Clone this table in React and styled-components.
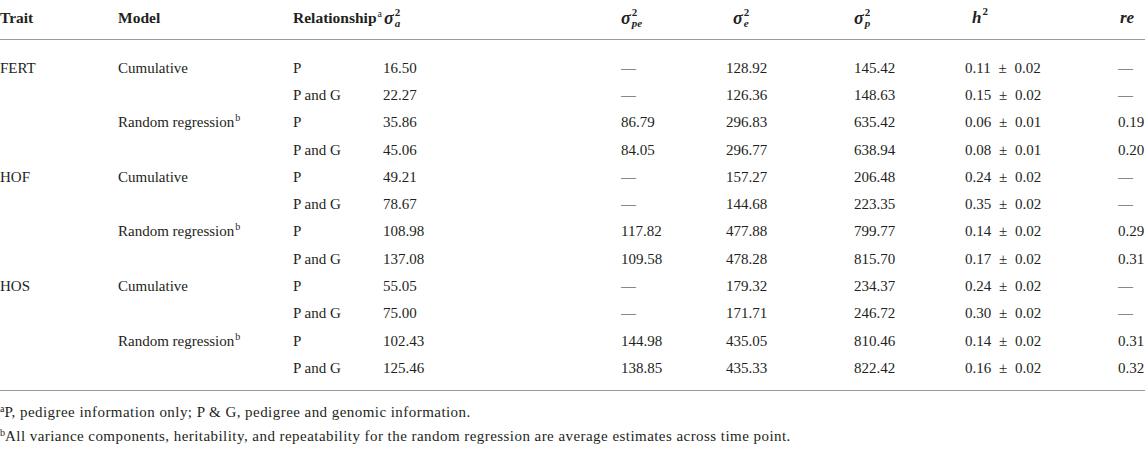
import React from "react";
import styled, { createGlobalStyle } from "styled-components";

const Global = createGlobalStyle`
  html, body { margin: 0; padding: 0; background: #ffffff; }
  body { font-family: "Liberation Serif", "Times New Roman", serif; color: #231f20; }
`;

const COLS = "118px 175px 90px 238px 105px 128px 111px 153px 1fr";

const Page = styled.div`
  width: 1145px;
  display: flex;
  flex-direction: column;
`;

const Table = styled.div`
  display: flex;
  flex-direction: column;
  border-bottom: 1px solid #9a9a9a;
  padding-bottom: 8px;
`;

const HeadRow = styled.div`
  display: grid;
  grid-template-columns: ${COLS};
  height: 40px;
  box-sizing: border-box;
  border-bottom: 1px solid #9a9a9a;
  padding-top: 8px;
  align-items: start;
  font-size: 15.5px;
  font-weight: bold;
  line-height: 20px;
`;

const Body = styled.div`
  display: flex;
  flex-direction: column;
  padding-top: 14px;
`;

const Row = styled.div`
  display: grid;
  grid-template-columns: ${COLS};
  height: 27.3px;
  align-items: center;
  font-size: 15px;
  line-height: 18px;
`;

const Cell = styled.div`
  white-space: nowrap;
  word-spacing: ${(p) => (p.$wide ? "4px" : "normal")};
`;

const HeadCell = styled.div`
  white-space: nowrap;
  padding-left: ${(p) => p.$shift || 0}px;
`;

const Note = styled.sup`
  font-size: 10px;
  font-weight: normal;
  vertical-align: 6px;
  line-height: 0;
  margin-left: 1px;
`;

const Ital = styled.span`
  font-style: italic;
  font-weight: bold;
  font-size: 17px;
`;

const Sigma = styled.span`
  display: inline-flex;
  align-items: flex-start;
  font-style: italic;
  font-weight: bold;
  font-size: 18px;
`;

const Scripts = styled.span`
  display: inline-flex;
  flex-direction: column;
  font-size: 11px;
  line-height: 10px;
  margin-left: 1px;
  margin-top: -1px;
`;

const SupTwo = styled.span`
  font-style: normal;
  font-weight: bold;
`;

const SubLetter = styled.span`
  font-style: italic;
  font-weight: bold;
  margin-top: 1px;
`;

const HTwo = styled.span`
  font-size: 11px;
  font-weight: bold;
  vertical-align: 8px;
  line-height: 0;
  margin-left: 1px;
`;

const Footnotes = styled.div`
  display: flex;
  flex-direction: column;
  gap: 6px;
  padding-top: 12px;
  font-size: 15px;
  letter-spacing: 0.45px;
  line-height: 18px;
`;

const FootLine = styled.div`
  white-space: nowrap;
`;

const FootMark = styled.sup`
  font-size: 10px;
  vertical-align: 5px;
  line-height: 0;
  letter-spacing: 0;
`;

const SigmaHead = ({ sub }) => (
  <Sigma>
    σ
    <Scripts>
      <SupTwo>2</SupTwo>
      <SubLetter>{sub}</SubLetter>
    </Scripts>
  </Sigma>
);

const rows = [
  ["FERT", "Cumulative", "P", "16.50", "—", "128.92", "145.42", "0.11 ± 0.02", "—"],
  ["", "", "P and G", "22.27", "—", "126.36", "148.63", "0.15 ± 0.02", "—"],
  ["", "RR", "P", "35.86", "86.79", "296.83", "635.42", "0.06 ± 0.01", "0.19"],
  ["", "", "P and G", "45.06", "84.05", "296.77", "638.94", "0.08 ± 0.01", "0.20"],
  ["HOF", "Cumulative", "P", "49.21", "—", "157.27", "206.48", "0.24 ± 0.02", "—"],
  ["", "", "P and G", "78.67", "—", "144.68", "223.35", "0.35 ± 0.02", "—"],
  ["", "RR", "P", "108.98", "117.82", "477.88", "799.77", "0.14 ± 0.02", "0.29"],
  ["", "", "P and G", "137.08", "109.58", "478.28", "815.70", "0.17 ± 0.02", "0.31"],
  ["HOS", "Cumulative", "P", "55.05", "—", "179.32", "234.37", "0.24 ± 0.02", "—"],
  ["", "", "P and G", "75.00", "—", "171.71", "246.72", "0.30 ± 0.02", "—"],
  ["", "RR", "P", "102.43", "144.98", "435.05", "810.46", "0.14 ± 0.02", "0.31"],
  ["", "", "P and G", "125.46", "138.85", "435.33", "822.42", "0.16 ± 0.02", "0.32"],
];

export default function App() {
  return (
    <Page>
      <Global />
      <Table>
        <HeadRow>
          <HeadCell>Trait</HeadCell>
          <HeadCell>Model</HeadCell>
          <HeadCell>
            Relationship<Note>a</Note>
          </HeadCell>
          <HeadCell $shift={1}>
            <SigmaHead sub="a" />
          </HeadCell>
          <HeadCell>
            <SigmaHead sub="pe" />
          </HeadCell>
          <HeadCell $shift={7}>
            <SigmaHead sub="e" />
          </HeadCell>
          <HeadCell>
            <SigmaHead sub="p" />
          </HeadCell>
          <HeadCell $shift={7}>
            <Ital>h</Ital>
            <HTwo>2</HTwo>
          </HeadCell>
          <HeadCell $shift={2}>
            <Ital>re</Ital>
          </HeadCell>
        </HeadRow>
        <Body>
          {rows.map((r, i) => (
            <Row key={i}>
              {r.map((c, j) => (
                <Cell key={j} $wide={j === 7}>
                  {c === "RR" ? (
                    <>
                      Random regression<Note>b</Note>
                    </>
                  ) : (
                    c
                  )}
                </Cell>
              ))}
            </Row>
          ))}
        </Body>
      </Table>
      <Footnotes>
        <FootLine>
          <FootMark>a</FootMark>P, pedigree information only; P &amp; G, pedigree and genomic information.
        </FootLine>
        <FootLine>
          <FootMark>b</FootMark>All variance components, heritability, and repeatability for the random regression are average estimates across time point.
        </FootLine>
      </Footnotes>
    </Page>
  );
}
